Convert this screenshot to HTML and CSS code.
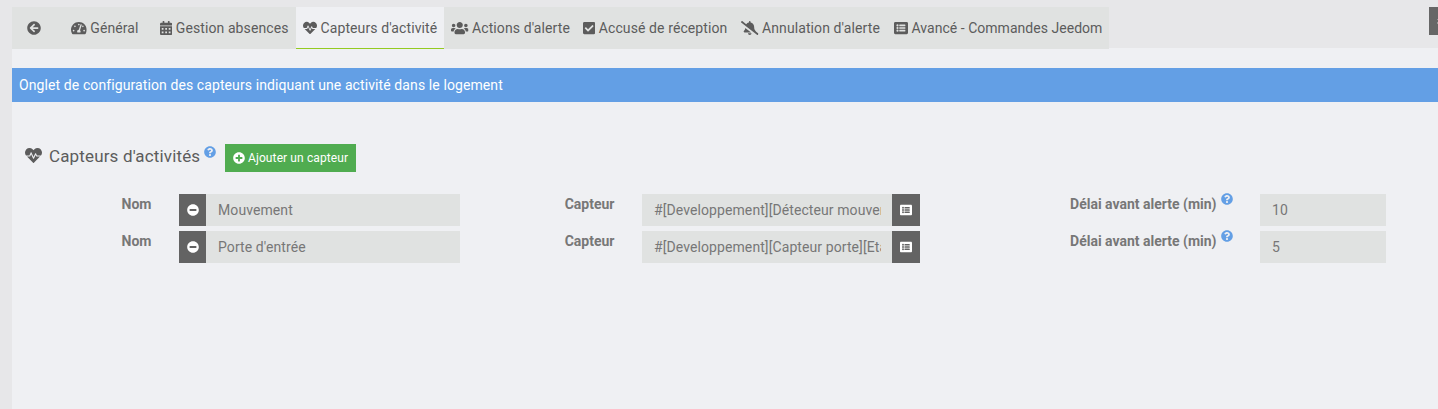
FILE: index.html
```html
<!DOCTYPE html>
<html lang="fr">
<head>
<meta charset="utf-8">
<title>Capteurs d'activité</title>
<link rel="stylesheet" href="styles.css">
</head>
<body>
<svg class="defs" aria-hidden="true">
  <symbol id="back" viewBox="0 0 512 512"><path d="M256 504C119 504 8 393 8 256S119 8 256 8s248 111 248 248-111 248-248 248zm28.900-143.600L209.400 288H392c13.300 0 24-10.700 24-24v-16c0-13.300-10.700-24-24-24H209.400l75.500-72.400c9.700-9.300 9.900-24.800.4-34.300l-11-10.900c-9.400-9.400-24.600-9.400-33.900 0L107.700 239c-9.400 9.400-9.400 24.600 0 33.900l132.700 132.700c9.400 9.400 24.600 9.400 33.900 0l11-10.900c9.500-9.500 9.300-25-.4-34.300z"/></symbol>
  <symbol id="gauge" viewBox="0 0 576 512"><path d="M288 32C128.940 32 0 160.940 0 320c0 52.800 14.250 102.260 39.060 144.800 5.610 9.620 16.300 15.200 27.440 15.200h443c11.140 0 21.830-5.580 27.440-15.200C561.750 422.260 576 372.800 576 320c0-159.060-128.940-288-288-288zm0 64c14.710 0 26.580 10.130 30.320 23.650-1.110 2.260-2.640 4.230-3.450 6.670l-9.220 27.670c-5.130 3.490-10.970 6.010-17.640 6.010-17.670 0-32-14.330-32-32S270.330 96 288 96zM96 384c-17.670 0-32-14.330-32-32s14.330-32 32-32 32 14.330 32 32-14.330 32-32 32zm48-160c-17.670 0-32-14.330-32-32s14.330-32 32-32 32 14.330 32 32-14.330 32-32 32zm246.770-72.410l-61.330 184C343.130 347.330 352 364.540 352 384c0 11.720-3.380 22.550-8.880 32H232.880c-5.500-9.450-8.880-20.280-8.880-32 0-33.940 26.500-61.430 59.900-63.590l61.340-184.010c4.170-12.560 17.730-19.450 30.360-15.170 12.570 4.190 19.350 17.790 15.170 30.360zm14.660 57.200l15.520-46.550c3.470-1.290 7.130-2.230 11.050-2.230 17.670 0 32 14.330 32 32s-14.330 32-32 32c-11.380-.01-21.250-6.100-26.570-15.220zM480 384c-17.670 0-32-14.330-32-32s14.330-32 32-32 32 14.330 32 32-14.330 32-32 32z"/></symbol>
  <symbol id="calendar" viewBox="0 0 448 512"><path fill-rule="evenodd" d="M0 464c0 26.500 21.500 48 48 48h352c26.500 0 48-21.500 48-48V192H0zM64 256h64v64H64zM192 256h64v64h-64zM320 256h64v64h-64zM64 384h64v64H64zM192 384h64v64h-64zM320 384h64v64h-64zM400 64h-48V16c0-8.800-7.200-16-16-16h-32c-8.800 0-16 7.200-16 16v48H160V16c0-8.800-7.200-16-16-16h-32c-8.800 0-16 7.200-16 16v48H48C21.500 64 0 85.500 0 112v48h448v-48c0-26.500-21.500-48-48-48z"/></symbol>
  <symbol id="heart" viewBox="0 0 512 512"><path d="M320.200 243.800l-49.700 99.400c-6 12.100-23.400 11.700-28.900-.6l-56.900-126.300-30 71.700H60.600l182.500 186.500c7.100 7.300 18.600 7.300 25.700 0L451.400 288H342.300l-22.100-44.200zM473.700 73.900l-2.400-2.500c-51.500-52.600-135.800-52.600-187.400 0L256 100l-27.900-28.500c-51.500-52.700-135.900-52.700-187.400 0l-2.400 2.400C-10.400 123.700-12.500 203 31 256h102.400l35.900-86.200c5.400-12.900 23.600-13.100 29.300-.2l57.600 127.900 49.200-98.300c5.900-11.700 22.700-11.700 28.600 0L358.500 256H481c43.500-53 41.400-132.300-7.300-182.100z"/></symbol>
  <symbol id="users" viewBox="0 0 640 512"><path d="M96 224c35.300 0 64-28.700 64-64s-28.700-64-64-64-64 28.700-64 64 28.700 64 64 64zm448 0c35.300 0 64-28.700 64-64s-28.700-64-64-64-64 28.700-64 64 28.700 64 64 64zm32 32h-64c-17.600 0-33.500 7.100-45.100 18.600 40.300 22.100 68.900 62 75.100 109.400h66c17.700 0 32-14.300 32-32v-32c0-35.300-28.700-64-64-64zm-256 0c61.900 0 112-50.100 112-112S381.900 32 320 32 208 82.100 208 144s50.100 112 112 112zm76.800 32h-8.300c-20.800 10-43.900 16-68.500 16s-47.600-6-68.500-16h-8.300C179.600 288 128 339.600 128 403.200V432c0 26.500 21.500 48 48 48h288c26.500 0 48-21.500 48-48v-28.800c0-63.600-51.600-115.200-115.200-115.200zm-223.700-13.400C161.500 263.100 145.600 256 128 256H64c-35.300 0-64 28.700-64 64v32c0 17.700 14.300 32 32 32h65.900c6.300-47.400 34.900-87.300 75.200-109.400z"/></symbol>
  <symbol id="check" viewBox="0 0 448 512"><path d="M400 480H48c-26.510 0-48-21.490-48-48V80c0-26.510 21.490-48 48-48h352c26.510 0 48 21.490 48 48v352c0 26.510-21.490 48-48 48zm-204.686-98.059l184-184c6.248-6.248 6.248-16.379 0-22.627l-22.627-22.627c-6.248-6.248-16.379-6.249-22.628 0L184 302.745l-70.059-70.059c-6.248-6.248-16.379-6.248-22.628 0l-22.627 22.627c-6.248 6.248-6.248 16.379 0 22.627l104 104c6.249 6.250 16.379 6.250 22.628.001z"/></symbol>
  <symbol id="bell" viewBox="0 0 640 512"><path d="M633.820 458.100l-90.620-70.050c.19-1.380.8-2.660.8-4.060.05-7.550-2.610-15.270-8.610-21.710-19.320-20.760-55.470-51.990-55.470-154.290 0-77.700-54.480-139.900-127.940-155.160V32c0-17.670-14.320-32-31.980-32s-31.980 14.330-31.980 32v20.840c-40.330 8.380-74.660 31.070-97.590 62.570L45.470 3.370C38.490-2.050 28.430-.8 23.010 6.180L3.370 31.450C-2.050 38.420-.8 48.470 6.180 53.900l588.350 454.730c6.980 5.430 17.030 4.170 22.460-2.810l19.640-25.270c5.420-6.970 4.170-17.020-2.810-22.450zM157.230 251.540c-8.610 67.960-36.410 93.330-52.620 110.750-6 6.450-8.660 14.160-8.610 21.710.11 16.400 12.980 32 32.100 32h241.920L157.230 251.540zM320 512c35.320 0 63.970-28.650 63.970-64H256.030c0 35.350 28.650 64 63.970 64z"/></symbol>
  <symbol id="list" viewBox="0 0 512 512"><path fill-rule="evenodd" d="M464 480H48c-26.510 0-48-21.490-48-48V80c0-26.510 21.490-48 48-48h416c26.510 0 48 21.490 48 48v352c0 26.510-21.490 48-48 48zM128 120a40 40 0 1 0 0 80 40 40 0 0 0 0-80zm0 96a40 40 0 1 0 0 80 40 40 0 0 0 0-80zm0 96a40 40 0 1 0 0 80 40 40 0 0 0 0-80zM204 132h200q12 0 12 12v32q0 12-12 12H204q-12 0-12-12v-32q0-12 12-12zm0 96h200q12 0 12 12v32q0 12-12 12H204q-12 0-12-12v-32q0-12 12-12zm0 96h200q12 0 12 12v32q0 12-12 12H204q-12 0-12-12v-32q0-12 12-12z"/></symbol>
  <symbol id="plus" viewBox="0 0 512 512"><path d="M256 8C119 8 8 119 8 256s111 248 248 248 248-111 248-248S393 8 256 8zm144 276c0 6.600-5.400 12-12 12h-92v92c0 6.600-5.400 12-12 12h-56c-6.600 0-12-5.400-12-12v-92h-92c-6.600 0-12-5.400-12-12v-56c0-6.600 5.400-12 12-12h92v-92c0-6.600 5.400-12 12-12h56c6.600 0 12 5.400 12 12v92h92c6.600 0 12 5.400 12 12v56z"/></symbol>
  <symbol id="minus" viewBox="0 0 512 512"><path d="M256 8C119 8 8 119 8 256s111 248 248 248 248-111 248-248S393 8 256 8zM124 296c-6.600 0-12-5.400-12-12v-56c0-6.600 5.400-12 12-12h264c6.600 0 12 5.400 12 12v56c0 6.600-5.400 12-12 12H124z"/></symbol>
  <symbol id="help" viewBox="0 0 512 512"><path d="M504 256c0 136.997-111.043 248-248 248S8 392.997 8 256C8 119.083 119.043 8 256 8s248 111.083 248 248zM262.655 90c-54.497 0-89.255 22.957-116.549 63.758-3.536 5.286-2.353 12.415 2.715 16.258l34.699 26.310c5.205 3.947 12.621 3.008 16.665-2.122 17.864-22.658 30.113-35.797 57.303-35.797 20.429 0 45.698 13.148 45.698 32.958 0 14.976-12.363 22.667-32.534 33.976C247.128 238.528 216 254.941 216 296v4c0 6.627 5.373 12 12 12h56c6.627 0 12-5.373 12-12v-1.333c0-28.462 83.186-29.647 83.186-106.667 0-58.002-60.165-102-116.531-102zM256 338c-25.365 0-46 20.635-46 46 0 25.364 20.635 46 46 46s46-20.636 46-46c0-25.365-20.635-46-46-46z"/></symbol>
</svg>

<header class="topbar">
  <nav class="tabs">
    <a class="tab tab-back"><svg class="icon"><use href="#back"/></svg></a>
    <a class="tab tab-general"><svg class="icon icon-gauge"><use href="#gauge"/></svg>Général</a>
    <a class="tab tab-absences"><svg class="icon icon-narrow"><use href="#calendar"/></svg>Gestion absences</a>
    <a class="tab tab-sensors active"><svg class="icon"><use href="#heart"/></svg>Capteurs d'activité</a>
    <a class="tab tab-actions"><svg class="icon icon-wide"><use href="#users"/></svg>Actions d'alerte</a>
    <a class="tab tab-receipt"><svg class="icon icon-narrow"><use href="#check"/></svg>Accusé de réception</a>
    <a class="tab tab-cancel"><svg class="icon icon-wide"><use href="#bell"/></svg>Annulation d'alerte</a>
    <a class="tab tab-advanced"><svg class="icon"><use href="#list"/></svg>Avancé - Commandes Jeedom</a>
  </nav>
  <div class="top-action"><i class="cog-edge"></i></div>
</header>

<main class="panel">
  <div class="notice">Onglet de configuration des capteurs indiquant une activité dans le logement</div>
  <div class="heading">
    <svg class="icon icon-heading"><use href="#heart"/></svg>
    <h1 class="title">Capteurs d'activités</h1>
    <svg class="icon help"><use href="#help"/></svg>
    <button class="add"><svg class="icon icon-small"><use href="#plus"/></svg>Ajouter un capteur</button>
  </div>
  <form class="rows">
    <div class="row">
      <label class="label">Nom</label>
      <div class="group"><span class="addon addon-left"><svg class="icon icon-small"><use href="#minus"/></svg></span><div class="field">Mouvement</div></div>
      <label class="label">Capteur</label>
      <div class="group"><div class="field"><span class="clip">#[Developpement][Détecteur mouvement]</span></div><span class="addon"><svg class="icon icon-small"><use href="#list"/></svg></span></div>
      <label class="label">Délai avant alerte (min)<svg class="icon help help-label"><use href="#help"/></svg></label>
      <div class="group"><div class="field">10</div></div>
    </div>
    <div class="row">
      <label class="label">Nom</label>
      <div class="group"><span class="addon addon-left"><svg class="icon icon-small"><use href="#minus"/></svg></span><div class="field">Porte d'entrée</div></div>
      <label class="label">Capteur</label>
      <div class="group"><div class="field"><span class="clip">#[Developpement][Capteur porte][Etat]</span></div><span class="addon"><svg class="icon icon-small"><use href="#list"/></svg></span></div>
      <label class="label">Délai avant alerte (min)<svg class="icon help help-label"><use href="#help"/></svg></label>
      <div class="group"><div class="field">5</div></div>
    </div>
  </form>
</main>
</body>
</html>
```
FILE: styles.css
```css
* { box-sizing: border-box; }
body {
  margin: 0;
  height: 409px;
  overflow: hidden;
  background: #e7e7e9;
  color: #5c5c5c;
  font: 14px/20px Roboto, sans-serif;
}
.defs { display: none; }
.icon { width: 14px; height: 14px; flex: none; fill: currentColor; }
.icon-gauge { width: 15.75px; }
.icon-narrow { width: 12.25px; }
.icon-wide { width: 17.5px; }
.icon-small { width: 12px; height: 12px; }

.topbar {
  display: flex;
  justify-content: space-between;
  align-items: flex-start;
  height: 48px;
  padding: 7px 0 0 12px;
}
.tabs { display: flex; position: relative; z-index: 1; height: 42px; background: #e0e2e1; }
.tab {
  display: flex;
  align-items: center;
  gap: 3.5px;
  padding-left: 7px;
  white-space: nowrap;
  letter-spacing: 0.1px;
  border-bottom: 1px solid transparent;
}
.tab-back { width: 52px; padding-left: 15px; }
.tab-general { width: 89px; }
.tab-absences { width: 143px; }
.tab-sensors { width: 148px; }
.tab-actions { width: 132px; }
.tab-receipt { width: 158px; }
.tab-cancel { width: 153px; }
.tab-advanced { width: 222px; letter-spacing: 0.03px; }
.tab.active { background: #eff0f3; border-bottom-color: #94ca22; }
.top-action { display: flex; align-items: center; width: 9px; height: 28px; padding-left: 8px; background: #666; }
.cog-edge { width: 1px; height: 5px; border: solid #999; border-width: 1px 0 2px; }

.panel { height: 361px; margin-left: 12px; padding-top: 20px; background: #eff0f3; }
.notice { height: 34px; padding: 7px; background: #639fe5; color: #fff; letter-spacing: 0.098px; }
.heading { display: flex; align-items: center; height: 28px; margin-top: 42px; padding-left: 13px; }
.icon-heading { width: 17px; height: 17px; margin: -5px 7px 0 0; }
.title { width: 151px; margin: -5px 4px 0 0; font-size: 17px; font-weight: 400; line-height: 20px; letter-spacing: 0.15px; white-space: nowrap; }
.help { width: 12px; height: 12px; color: #639fe5; }
.heading .help { margin: -13px 9px 0 0; }
.add {
  display: flex;
  align-items: center;
  gap: 3px;
  width: 131px;
  height: 28px;
  padding: 0 0 0 8px;
  border: 0;
  background: #50ac50;
  color: #fff;
  font: 12px/18px Roboto, sans-serif;
  letter-spacing: 0.11px;
  white-space: nowrap;
}
.rows { display: grid; gap: 5px; margin-top: 22px; }
.row {
  display: grid;
  grid-template-columns: 139.5px 281px 127px 278px 285px 126px;
  column-gap: 27.5px;
  height: 32px;
}
.label { display: flex; justify-content: flex-end; color: #777; font-weight: 700; white-space: nowrap; }
.help-label { margin: -1px 0 0 4px; }
.group { display: flex; min-width: 0; height: 32px; color: #777; letter-spacing: 0.09px; }
.field { flex: 1; min-width: 0; padding: 6px 12px; background: #e0e2e1; }
.clip { display: block; width: 227px; overflow: hidden; white-space: nowrap; }
.addon { display: flex; align-items: center; justify-content: center; flex: none; width: 28px; background: #636363; color: #fff; }
.addon-left { width: 27px; }
```
